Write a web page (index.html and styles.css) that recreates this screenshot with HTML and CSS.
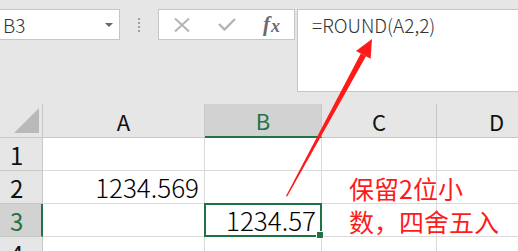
FILE: index.html
```html
<!DOCTYPE html>
<html lang="zh-CN">
<head>
  <meta charset="UTF-8" />
  <title>ROUND</title>
  <link rel="stylesheet" href="styles.css">
</head>
<body>
  <div class="toolbar">
    <div class="namebox">
      <span>B3</span>
      <i class="caret"></i>
    </div>
    <div class="grip"><i></i><i></i><i></i><i></i></div>
    <div class="fxbox">
      <span class="btn">
        <svg width="16" height="14" viewBox="0 0 16 14"><path d="M1 0.5 L15 13.5 M15 0.5 L1 13.5" stroke="#b4b4b4" stroke-width="2" fill="none"/></svg>
      </span>
      <span class="btn">
        <svg width="18" height="13" viewBox="0 0 18 13"><path d="M1 6 L6.5 11.5 L17 1" stroke="#b4b4b4" stroke-width="2.4" fill="none"/></svg>
      </span>
      <span class="btn fx"><em>f</em><em>x</em></span>
    </div>
    <div class="formula">=ROUND(A2,2)</div>
  </div>

  <div class="sheet">
    <div class="corner"><i class="tri"></i></div>
    <div class="colhead">A</div>
    <div class="colhead active">B</div>
    <div class="colhead">C</div>
    <div class="colhead">D</div>

    <div class="rowhead">1</div>
    <div class="cell"></div>
    <div class="cell"></div>
    <div class="cell"></div>
    <div class="cell"></div>

    <div class="rowhead">2</div>
    <div class="cell num">1234.569</div>
    <div class="cell"></div>
    <div class="cell"></div>
    <div class="cell"></div>

    <div class="rowhead active">3</div>
    <div class="cell"></div>
    <div class="cell num selected">1234.57</div>
    <div class="cell"></div>
    <div class="cell"></div>

    <div class="rowhead">4</div>
    <div class="cell"></div>
    <div class="cell"></div>
    <div class="cell"></div>
    <div class="cell"></div>
  </div>

  <svg class="arrow" width="518" height="251" viewBox="0 0 518 251">
    <polygon points="286,196 360.8,53.4 366,56.2 287.2,196.5" fill="#ff1a1a"/>
    <polygon points="372,39 356,51 370.6,58.8" fill="#ff1a1a"/>
  </svg>

  <div class="note">保留2位小<br>数，四舍五入</div>
</body>
</html>
```

FILE: styles.css
```css
* {
  box-sizing: border-box;
}

body {
  margin: 0;
  width: 518px;
  height: 251px;
  overflow: hidden;
  position: relative;
  background: #fff;
  font-family: "Noto Sans CJK SC", "Noto Sans", sans-serif;
  font-weight: 300;
  color: #000;
}

/* formula bar area */
.toolbar {
  height: 104px;
  padding-top: 9px;
  background: #e6e6e6;
  display: flex;
  align-items: flex-start;
}

.namebox {
  margin-left: -1px;
  width: 121px;
  height: 31px;
  background: #fff;
  border: 1px solid #c6c6c6;
  display: flex;
  align-items: center;
  justify-content: space-between;
  padding: 0 6px 0 3px;
  font-size: 19px;
  color: #333;
}

.caret {
  width: 0;
  height: 0;
  border-left: 4px solid transparent;
  border-right: 4px solid transparent;
  border-top: 4px solid #666;
}

.grip {
  width: 38px;
  height: 31px;
  display: flex;
  flex-direction: column;
  align-items: center;
  justify-content: center;
  gap: 2px;
}

.grip i {
  width: 2px;
  height: 2px;
  background: #a0a0a0;
}

.fxbox {
  width: 137px;
  height: 31px;
  background: #fff;
  border: 1px solid #c6c6c6;
  display: flex;
  align-items: center;
}

.btn {
  width: 45px;
  display: flex;
  justify-content: center;
  align-items: center;
}

.fx {
  font-family: "Liberation Serif", serif;
  font-size: 21px;
  font-weight: bold;
  color: #6b6b6b;
}

.fx em:last-child {
  font-size: 18px;
  margin-left: 1px;
  position: relative;
  top: 2px;
}

.formula {
  flex: 1;
  margin-left: 2px;
  height: 83px;
  background: #fff;
  border: 1px solid #c6c6c6;
  border-right: none;
  padding: 1px 14px;
  font-size: 19px;
  color: #333;
}

/* grid */
.sheet {
  display: grid;
  grid-template-columns: 43px 162px 117px 115px 120px;
  grid-template-rows: 34px 33px 33px 33px 33px;
}

.corner,
.colhead,
.rowhead {
  background: #e6e6e6;
  border-right: 1px solid #c8c8c8;
  border-bottom: 1px solid #c8c8c8;
}

.corner {
  position: relative;
}

.tri {
  position: absolute;
  right: 3px;
  bottom: 4px;
  width: 0;
  height: 0;
  border-left: 25px solid transparent;
  border-bottom: 25px solid #b9b9b9;
}

.colhead {
  display: flex;
  align-items: center;
  justify-content: center;
  font-size: 22px;
  font-weight: 400;
  color: #111;
}

.rowhead {
  padding-left: 10px;
  display: flex;
  align-items: center;
  font-size: 24px;
  font-weight: 400;
  color: #111;
}

.colhead.active {
  background: #d2d2d2;
  color: #217346;
  border-bottom: 2px solid #217346;
}

.rowhead.active {
  background: #d2d2d2;
  color: #217346;
  border-right: 2px solid #217346;
}

.cell {
  border-right: 1px solid #dadada;
  border-bottom: 1px solid #dadada;
  font-size: 26px;
  line-height: 32px;
}

.num {
  text-align: right;
  padding-right: 5px;
}

.selected {
  position: relative;
  border: 2px solid #217346;
  margin: -1px 0 0 -1px;
  padding-right: 4px;
  line-height: 30px;
}

.selected::after {
  content: "";
  position: absolute;
  right: -4px;
  bottom: -4px;
  width: 6px;
  height: 6px;
  background: #217346;
  border: 1px solid #fff;
}

/* annotation */
.arrow {
  position: absolute;
  left: 0;
  top: 0;
}

.note {
  position: absolute;
  left: 349px;
  top: 172px;
  font-size: 25px;
  font-weight: 400;
  line-height: 33px;
  color: #ff1a1a;
}
```
